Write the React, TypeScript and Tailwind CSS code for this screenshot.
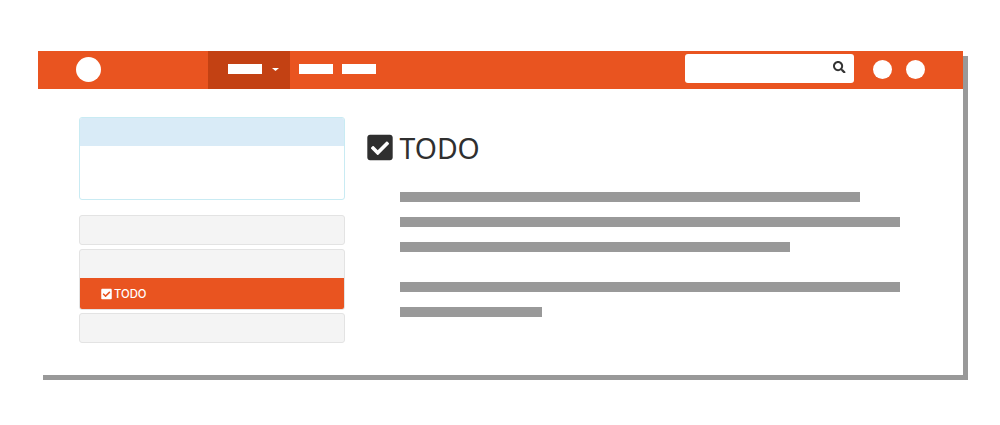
import React from "react";
import { FaCheckSquare, FaSearch } from "react-icons/fa";

function Header() {
  return (
    <header className="flex h-[38.5px] items-center bg-[#e95420]">
      <div className="ml-[38px] size-[25px] shrink-0 rounded-full bg-white" />
      <nav className="ml-[107px] flex h-full items-center">
        <div className="flex h-full w-[81.5px] items-center bg-[#c34113] pl-[20px]">
          <div className="mt-[-1px] h-[10px] w-[34px] bg-white" />
          <svg className="ml-[10px] h-[3px] w-[7px]" viewBox="0 0 7 3">
            <path d="M0 0h7L3.5 3z" fill="#fff" />
          </svg>
        </div>
        <div className="mt-[-1px] ml-[9px] h-[10px] w-[34px] bg-white" />
        <div className="mt-[-1px] ml-[9.5px] h-[10px] w-[34px] bg-white" />
      </nav>
      <div className="mt-[-2.5px] ml-[309px] flex h-[29px] w-[169px] items-center justify-end rounded-[3px] bg-white pr-[8.5px]">
        <FaSearch className="mt-[-3px] size-[12.5px] text-[#333333]" />
      </div>
      <div className="ml-[19px] size-[19px] rounded-full bg-white" />
      <div className="ml-[13.5px] size-[19px] rounded-full bg-white" />
    </header>
  );
}

function Sidebar() {
  return (
    <aside className="flex w-[266px] flex-col">
      <div className="h-[83px] overflow-hidden rounded-[3px] border border-[#c9ebf3] bg-white">
        <div className="h-[28px] bg-[#d9ebf7]" />
      </div>
      <div className="mt-[15px] h-[30px] rounded-[3px] border border-[#e3e3e3] bg-[#f4f4f4]" />
      <div className="mt-[3.5px] h-[61px] overflow-hidden rounded-[3px] border border-[#e3e3e3] bg-[#f4f4f4]">
        <div className="mt-[28.5px] flex h-[31px] items-center bg-[#e95420] pl-[21px] font-['Inter',sans-serif] text-[11.3px] font-medium text-white">
          <FaCheckSquare className="h-[12px] w-[11px]" />
          <span className="mt-[2px] ml-[2px]">TODO</span>
        </div>
      </div>
      <div className="mt-[3px] h-[30px] rounded-[3px] border border-[#e3e3e3] bg-[#f4f4f4]" />
    </aside>
  );
}

function Content() {
  return (
    <main className="ml-[22px] pt-[10.5px]">
      <h1 className="flex h-[40px] items-center font-['Noto_Sans',sans-serif] text-[28.4px] text-[#2f2f2f]">
        <FaCheckSquare className="h-[29px] w-[26px]" />
        <span className="mt-[1px] ml-[6.5px]">TODO</span>
      </h1>
      <div className="mt-[24.2px] ml-[33px] flex flex-col gap-[15px]">
        <div className="h-[10px] w-[460px] bg-[#999999]" />
        <div className="h-[10px] w-[500px] bg-[#999999]" />
        <div className="h-[10px] w-[390px] bg-[#999999]" />
        <div className="mt-[15px] h-[10px] w-[500px] bg-[#999999]" />
        <div className="h-[10px] w-[142px] bg-[#999999]" />
      </div>
    </main>
  );
}

export default function App() {
  return (
    <div className="h-[425px] w-[1000px] overflow-hidden bg-white pt-[50.5px] pl-[38px]">
      <div className="h-[324.5px] w-[925px] bg-white shadow-[5px_5px_0_0_#999999]">
        <Header />
        <div className="flex pt-[28px] pl-[41px]">
          <Sidebar />
          <Content />
        </div>
      </div>
    </div>
  );
}
